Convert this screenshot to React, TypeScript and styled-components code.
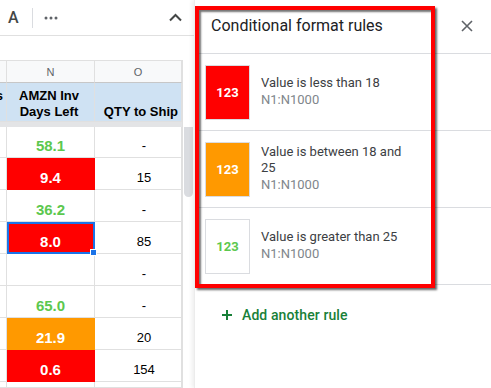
import React from "react"
import styled, { createGlobalStyle } from "styled-components"

const GlobalStyle = createGlobalStyle`
  html, body {
    margin: 0;
    padding: 0;
    background: #ffffff;
  }
  body {
    width: 491px;
    height: 388px;
    overflow: hidden;
    font-family: "Liberation Sans", Arial, sans-serif;
  }
  * {
    box-sizing: border-box;
  }
`

const Page = styled.div`
  display: flex;
  width: 491px;
  height: 388px;
  overflow: hidden;
`

const Sheet = styled.div`
  width: 194px;
  flex-shrink: 0;
  display: flex;
  flex-direction: column;
`

const Toolbar = styled.div`
  height: 36px;
  display: flex;
  align-items: center;
  padding: 0 12px 0 8px;
  border-bottom: 1px solid #e0e0e0;
  color: #444746;
`

const FontButton = styled.span`
  font-family: Roboto, "Liberation Sans", sans-serif;
  font-size: 16px;
  font-weight: 500;
  width: 13px;
`

const ToolbarDivider = styled.span`
  width: 1px;
  height: 20px;
  background: #dadce0;
  margin: 0 11px 0 11px;
`

const Spacer = styled.span`
  flex: 1;
`

const FormulaBar = styled.div`
  height: 24px;
`

const Grid = styled.div`
  flex: 1;
  display: grid;
  grid-template-columns: 7px 88px 87px 12px;
  grid-template-rows: 23px 39px 5px 31px repeat(7, 32px) 1fr;
`

const LetterCell = styled.div`
  background: #f8f9fa;
  border-right: 1px solid #e0e0e0;
  border-bottom: 1px solid #c7c7c7;
  border-top: 1px solid #e0e0e0;
  color: #5f6368;
  font-size: 11px;
  display: flex;
  align-items: center;
  justify-content: center;
`

const HeadCell = styled.div<{ $align?: string }>`
  background: #cfe2f3;
  border-right: 1px solid #e0e0e0;
  border-bottom: 1px solid #e0e0e0;
  font-size: 13px;
  font-weight: 700;
  line-height: 16px;
  color: #000;
  display: flex;
  flex-direction: column;
  justify-content: flex-end;
  align-items: ${(p) => p.$align || "center"};
  text-align: center;
  padding: 0 3px 1px 0;
  overflow: hidden;
  white-space: nowrap;
`

const FrozenBar = styled.div`
  grid-column: 1 / 4;
  background: #e3e4e6;
`

const ScrollTrack = styled.div`
  grid-column: 4;
  grid-row: 1 / -1;
  border-left: 1px solid #e0e0e0;
  padding: 67px 1px 0 1px;
  background: #fff;
`

const ScrollThumb = styled.div`
  height: 70px;
  border-radius: 0 0 5px 5px;
  background: #dadce0;
`

const tones: Record<string, { bg: string; color: string }> = {
  green: { bg: "#ffffff", color: "#5cc84e" },
  red: { bg: "#ff0000", color: "#ffffff" },
  orange: { bg: "#ff9900", color: "#ffffff" },
  none: { bg: "#ffffff", color: "#000" },
}

const EdgeCell = styled.div`
  border-right: 1px solid #e0e0e0;
  border-bottom: 1px solid #e0e0e0;
`

const ValueCell = styled.div<{ $tone: string; $selected?: boolean }>`
  position: relative;
  background: ${(p) => tones[p.$tone].bg};
  color: ${(p) => tones[p.$tone].color};
  border-right: 1px solid ${(p) => (p.$tone === "orange" || p.$tone === "red" ? "transparent" : "#e0e0e0")};
  border-bottom: 1px solid ${(p) => (p.$tone === "orange" || p.$tone === "red" ? "transparent" : "#e0e0e0")};
  font-size: 15px;
  font-weight: 700;
  line-height: 17px;
  display: flex;
  align-items: flex-end;
  justify-content: center;
  padding-bottom: 3px;
  ${(p) =>
    p.$selected &&
    `
    outline: 2px solid #1a73e8;
    outline-offset: -2px;
  `}
`

const FillHandle = styled.span`
  position: absolute;
  right: -3px;
  bottom: -3px;
  width: 7px;
  height: 7px;
  background: #1a73e8;
  border: 1px solid #fff;
  z-index: 2;
`

const QtyCell = styled.div`
  border-right: 1px solid #e0e0e0;
  border-bottom: 1px solid #e0e0e0;
  font-size: 13px;
  line-height: 15px;
  color: #000;
  display: flex;
  align-items: flex-end;
  justify-content: center;
  padding: 0 0 4px 12px;
`

const Panel = styled.div`
  position: relative;
  flex: 1;
  background: #fff;
  box-shadow: -2px 0 4px rgba(0, 0, 0, 0.07);
  border-left: 1px solid #ececec;
  font-family: Roboto, "Liberation Sans", sans-serif;
  display: flex;
  flex-direction: column;
`

const PanelHeader = styled.div`
  height: 54px;
  display: flex;
  align-items: center;
  justify-content: space-between;
  padding: 0 18px 2px 16px;
  border-bottom: 1px solid #dadce0;
`

const Title = styled.span`
  font-size: 16px;
  color: #202124;
`

const RuleRow = styled.div`
  height: 77px;
  display: flex;
  align-items: center;
  gap: 11px;
  padding: 0 0 0 10px;
  border-bottom: 1px solid #dadce0;
`

const Swatch = styled.div<{ $tone: string }>`
  width: 45px;
  height: 55px;
  flex-shrink: 0;
  border: 1px solid #dadce0;
  background: ${(p) => tones[p.$tone].bg};
  color: ${(p) => tones[p.$tone].color};
  font-size: 13px;
  font-weight: 700;
  display: flex;
  align-items: center;
  justify-content: center;
`

const RuleText = styled.div`
  width: 152px;
  display: flex;
  flex-direction: column;
`

const RuleDesc = styled.span`
  font-size: 13px;
  line-height: 16px;
  color: #3c4043;
`

const RuleRange = styled.span`
  font-size: 13px;
  line-height: 18px;
  color: #80868b;
`

const AddRule = styled.div`
  display: flex;
  align-items: center;
  gap: 10px;
  padding: 22px 0 0 27px;
  color: #188038;
  font-size: 14px;
  font-weight: 500;
  letter-spacing: 0.1px;
`

const Highlight = styled.div`
  position: absolute;
  left: 0;
  top: 6px;
  width: 240px;
  height: 282px;
  border: 4px solid #ff0000;
  box-shadow: 2px 2px 2px rgba(0, 0, 0, 0.6), inset 2px 2px 2px rgba(0, 0, 0, 0.55);
  pointer-events: none;
`

const rows = [
  { n: "58.1", tone: "green", o: "-" },
  { n: "9.4", tone: "red", o: "15" },
  { n: "36.2", tone: "green", o: "-" },
  { n: "8.0", tone: "red", o: "85", selected: true },
  { n: "", tone: "none", o: "-" },
  { n: "65.0", tone: "green", o: "-" },
  { n: "21.9", tone: "orange", o: "20" },
  { n: "0.6", tone: "red", o: "154" },
  { n: "", tone: "none", o: "" },
]

const rules = [
  { tone: "red", text: "Value is less than 18" },
  { tone: "orange", text: "Value is between 18 and 25" },
  { tone: "green", text: "Value is greater than 25" },
]

export default function App() {
  return (
    <Page>
      <GlobalStyle />
      <Sheet>
        <Toolbar>
          <FontButton>A</FontButton>
          <ToolbarDivider />
          <svg width="14" height="4" viewBox="0 0 14 4">
            <circle cx="2" cy="2" r="1.5" fill="#5f6368" />
            <circle cx="7" cy="2" r="1.5" fill="#5f6368" />
            <circle cx="12" cy="2" r="1.5" fill="#5f6368" />
          </svg>
          <Spacer />
          <svg width="13" height="9" viewBox="0 0 13 9">
            <polyline points="1,7.5 6.5,2 12,7.5" fill="none" stroke="#444746" strokeWidth="2" />
          </svg>
        </Toolbar>
        <FormulaBar />
        <Grid>
          <LetterCell />
          <LetterCell>N</LetterCell>
          <LetterCell>O</LetterCell>
          <ScrollTrack>
            <ScrollThumb />
          </ScrollTrack>
          <HeadCell $align="flex-end">
            <span>s</span>
            <span>&nbsp;</span>
          </HeadCell>
          <HeadCell>
            <span>AMZN Inv</span>
            <span>Days Left</span>
          </HeadCell>
          <HeadCell $align="flex-end">
            <span>QTY to Ship</span>
          </HeadCell>
          <FrozenBar />
          {rows.map((r, i) => (
            <React.Fragment key={i}>
              <EdgeCell />
              <ValueCell $tone={r.tone} $selected={r.selected}>
                {r.n}
                {r.selected && <FillHandle />}
              </ValueCell>
              <QtyCell>{r.o}</QtyCell>
            </React.Fragment>
          ))}
        </Grid>
      </Sheet>
      <Panel>
        <PanelHeader>
          <Title>Conditional format rules</Title>
          <svg width="12" height="12" viewBox="0 0 12 12">
            <path d="M1 1 L11 11 M11 1 L1 11" stroke="#5f6368" strokeWidth="1.6" />
          </svg>
        </PanelHeader>
        {rules.map((rule) => (
          <RuleRow key={rule.text}>
            <Swatch $tone={rule.tone}>123</Swatch>
            <RuleText>
              <RuleDesc>{rule.text}</RuleDesc>
              <RuleRange>N1:N1000</RuleRange>
            </RuleText>
          </RuleRow>
        ))}
        <AddRule>
          <svg width="10" height="10" viewBox="0 0 10 10">
            <path d="M5 0 V10 M0 5 H10" stroke="#188038" strokeWidth="2" />
          </svg>
          Add another rule
        </AddRule>
        <Highlight />
      </Panel>
    </Page>
  )
}
